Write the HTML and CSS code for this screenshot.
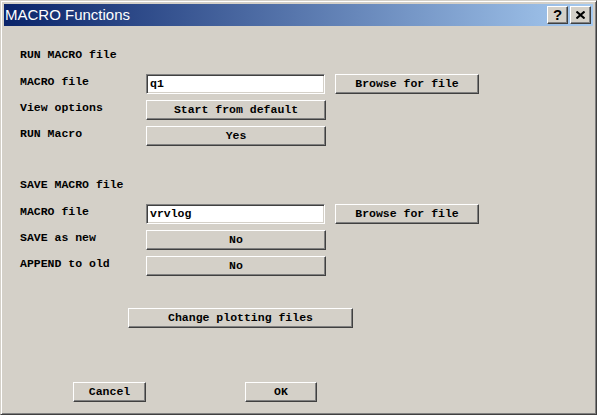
FILE: index.html
```html
<!DOCTYPE html>
<html>
<head>
<meta charset="utf-8">
<link rel="stylesheet" href="styles.css">
</head>
<body>
<div class="window">
  <div class="titlebar">
    <span class="title">MACRO Functions</span>
    <div class="caption-buttons">
      <div class="cap-btn help">?</div>
      <div class="cap-btn close">
        <svg width="9" height="8" viewBox="0 0 9 8"><path d="M0.5 0.5 L8.5 7.5 M8.5 0.5 L0.5 7.5" stroke="#000" stroke-width="2" fill="none"/></svg>
      </div>
    </div>
  </div>
  <div class="content">
    <div class="header first">RUN MACRO file</div>
    <div class="row first-row">
      <div class="label">MACRO file</div>
      <div class="input">q1</div>
      <div class="btn browse">Browse for file</div>
    </div>
    <div class="row">
      <div class="label">View options</div>
      <div class="btn control">Start from default</div>
    </div>
    <div class="row">
      <div class="label">RUN Macro</div>
      <div class="btn control">Yes</div>
    </div>

    <div class="header second">SAVE MACRO file</div>
    <div class="row first-row">
      <div class="label">MACRO file</div>
      <div class="input">vrvlog</div>
      <div class="btn browse">Browse for file</div>
    </div>
    <div class="row">
      <div class="label">SAVE as new</div>
      <div class="btn control">No</div>
    </div>
    <div class="row">
      <div class="label">APPEND to old</div>
      <div class="btn control">No</div>
    </div>

    <div class="plot-row">
      <div class="btn plot">Change plotting files</div>
    </div>

    <div class="bottom-row">
      <div class="btn cancel">Cancel</div>
      <div class="btn ok">OK</div>
    </div>
  </div>
</div>
</body>
</html>
```

FILE: styles.css
```css
html, body {
  margin: 0;
  padding: 0;
  background: #d4d0c8;
}

.window {
  width: 597px;
  height: 415px;
  box-sizing: border-box;
  background: #d4d0c8;
  border: 1px solid;
  border-color: #d4d0c8 #404040 #404040 #d4d0c8;
  box-shadow: inset 1px 1px #ffffff, inset -1px -1px #808080;
  padding: 3px;
  font-family: "Liberation Mono", "DejaVu Sans Mono", monospace;
  font-weight: bold;
  font-size: 11.5px;
  color: #000;
}

.titlebar {
  height: 22px;
  display: flex;
  align-items: center;
  justify-content: space-between;
  background: linear-gradient(to right, #0a246a, #a6caf0);
}

.title {
  font-family: "Liberation Sans", Arial, sans-serif;
  font-weight: normal;
  font-size: 15px;
  color: #fff;
  padding-left: 1px;
  line-height: 22px;
}

.caption-buttons {
  display: flex;
  gap: 2px;
  margin-right: 2px;
}

.cap-btn {
  width: 21px;
  height: 18px;
  box-sizing: border-box;
  background: #d4d0c8;
  border: 1px solid;
  border-color: #ffffff #404040 #404040 #ffffff;
  box-shadow: inset -1px -1px #808080;
  display: flex;
  align-items: center;
  justify-content: center;
}

.help {
  font-family: "Liberation Sans", Arial, sans-serif;
  font-weight: bold;
  font-size: 15px;
  line-height: 16px;
  padding-bottom: 1px;
}

.close svg {
  display: block;
  margin-top: -1px;
}

.content {
  padding-left: 16px;
  display: flex;
  flex-direction: column;
}

.header {
  height: 16px;
  line-height: 16px;
}

.header.first {
  margin-top: 21px;
}

.header.second {
  margin-top: 31px;
}

.row {
  display: flex;
  height: 20px;
  margin-top: 6px;
}

.row.first-row {
  margin-top: 11px;
}

.label {
  width: 126px;
  line-height: 16px;
}

.btn {
  box-sizing: border-box;
  height: 20px;
  background: #d4d0c8;
  border: 1px solid;
  border-color: #ffffff #404040 #404040 #ffffff;
  box-shadow: inset -1px -1px #808080;
  display: flex;
  align-items: center;
  justify-content: center;
  padding-bottom: 1px;
}

.control {
  width: 180px;
}

.input {
  box-sizing: border-box;
  width: 179px;
  height: 20px;
  background: #ffffff;
  border: 1px solid;
  border-color: #808080 #ffffff #ffffff #808080;
  box-shadow: inset 1px 1px #404040, inset -1px -1px #d4d0c8;
  padding-left: 3px;
  line-height: 17px;
}

.browse {
  width: 144px;
  margin-left: 10px;
}

.plot-row {
  display: flex;
  margin-top: 32px;
}

.plot {
  margin-left: 108px;
  width: 225px;
}

.bottom-row {
  display: flex;
  margin-top: 54px;
}

.cancel {
  margin-left: 53px;
  width: 73px;
}

.ok {
  margin-left: 99px;
  width: 72px;
}
```
